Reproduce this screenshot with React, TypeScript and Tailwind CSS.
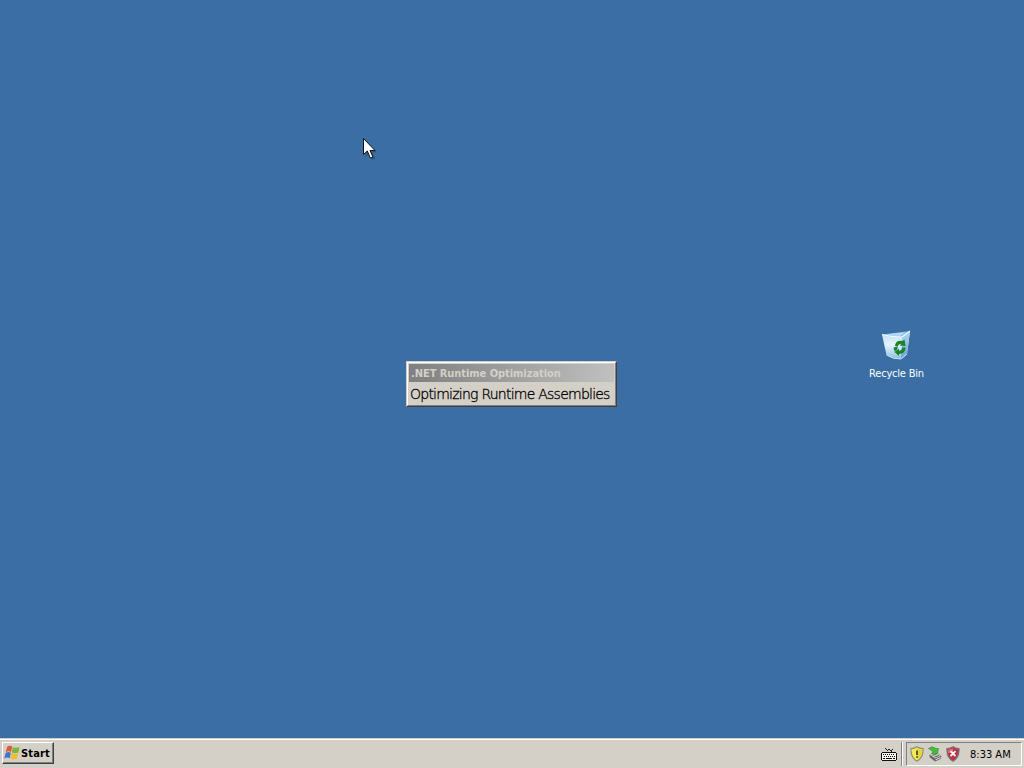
const WindowsFlag = () => (
  <svg width="17" height="16" viewBox="0 0 17 16" className="shrink-0">
    <path d="M3.2 1.8C5 .2 6.800 .4 8.200 1.6L7 7C5.6 6 3.800 6 1.800 7.200Z" fill="#e2582c" />
    <path d="M8.900 1.900C11 3.100 13 3.200 15.600 2.100L14.400 7.500C12 8.600 9.600 8.400 7.700 7.300Z" fill="#75b83b" />
    <path d="M1.600 7.900C3.600 6.800 5.200 6.800 6.900 7.800L5.700 13.200C4.200 12.200 2.400 12.200 .3 13.400Z" fill="#3c74d6" />
    <path d="M7.500 8.100C9.500 9.200 11.800 9.300 14.200 8.200L13 13.800C10.400 14.900 8.200 14.800 6.300 13.600Z" fill="#f1bd2e" />
  </svg>
);

const RecycleBinIcon = () => (
  <svg width="32" height="32" viewBox="0 0 32 32" className="mr-0.5">
    <defs>
      <linearGradient id="bin-body" x1="0" y1="0" x2="0" y2="1">
        <stop offset="0" stopColor="#b9dcf5" />
        <stop offset="0.5" stopColor="#e6f4fc" />
        <stop offset="1" stopColor="#8ebce4" />
      </linearGradient>
      <linearGradient id="bin-side" x1="0" y1="0" x2="0" y2="1">
        <stop offset="0" stopColor="#b4daf3" />
        <stop offset="1" stopColor="#6a9fd3" />
      </linearGradient>
    </defs>
    <path d="M2 5.5Q11 8 22 8L30 2L27 25Q25 28 21 30Q13 30.5 6.5 26Z" fill="url(#bin-body)" />
    <path d="M22 8L30 2L27 25L21 30Z" fill="url(#bin-side)" />
    <path d="M2 5.5L14 4Q22 3 30 2L22 8Q11 8 2 5.5Z" fill="#86bfe9" />
    <path d="M7 5.6Q15 4 25 3.5L20.5 6.7Q13 7.2 7 5.6Z" fill="#b4dcf6" />
    <path d="M2 5.5Q11 8 22 8L30 2" fill="none" stroke="#f4fcff" strokeWidth="1.2" />
    <path d="M6.5 26Q13 30.5 21 30L27 25" fill="none" stroke="#c1def4" strokeWidth="1" />
    <path d="M15 17Q15.500 11 22.500 12L24.500 10.500L25.500 17L19.500 16.500L21.500 14.800Q18.500 14.500 17.800 17.500Z" fill="#168522" />
    <path d="M25.500 18.500Q25.500 24.500 19 25L19 27L14.500 23L19 19.500V21.700Q22 21.500 22.500 18.500Z" fill="#168522" />
    <path d="M13.500 18.500L18 17.500L17 20.500L14.500 22.500Z" fill="#168522" />
  </svg>
);

const KeyboardIcon = () => (
  <svg width="18" height="16" viewBox="0 0 18 16" shapeRendering="crispEdges">
    <path
      d="M5 1h1v1h-1zM6 2h1v1h-1zM7 3h1v-1h1v1h-1v1h-1zM9 2h1v1h1v1h-1v-1h-1zM11 3h1v-1h1v1h-1v2h-1z"
      fill="#222"
    />
    <path d="M2 5h14v1h1v7h-1v1h-14v-1h-1v-7h1z" fill="#111" />
    <rect x="2" y="6" width="14" height="7" fill="#f4f3ef" />
    <path
      d="M3 7.5h12M4 9.5h12"
      stroke="#111"
      strokeWidth="1"
      strokeDasharray="1 1"
    />
    <path d="M3 11.5h2M6 11.5h6M13 11.5h2" stroke="#111" strokeWidth="1" />
  </svg>
);

const shieldPath =
  "M7 .8C9 2.2 11 2.6 13 2.6C13.4 8.5 12 12.5 7 15.2C2 12.5 .6 8.5 1 2.6C3 2.6 5 2.2 7 .8Z";

const WarningShield = () => (
  <svg width="14" height="16" viewBox="0 0 14 16">
    <path d={shieldPath} fill="#f4ed48" stroke="#8a8b78" strokeWidth="1.1" />
    <path d="M7 2.2V14C10.8 11.5 12 8 12 3.6Q9 3.4 7 2.2Z" fill="#e4d932" />
    <path d="M7 4.5V9M7 10.3V11.8" stroke="#242410" strokeWidth="1.4" />
  </svg>
);

const HardwareIcon = () => (
  <svg width="16" height="16" viewBox="0 0 16 16">
    <path d="M2.5 8.500L9 5.500L14.500 10L13.500 13L8 15.500L2.500 11Z" fill="#606460" />
    <path d="M2.500 8.500L9 5.500L14 10L8 12.500Z" fill="#cdd0c8" />
    <path d="M5.500 9.500L10 7.500M7.500 11L12 9.500" stroke="#555" />
    <path d="M8.500 13.800L13.500 11.700" stroke="#e5e5df" />
    <path d="M1.500 2.500L5 .8L9 2.500L11.500 2.500L10.500 7.500L4.500 8L6 5.500Z" fill="#45bf3b" stroke="#278c28" strokeWidth="0.6" />
  </svg>
);

const ErrorShield = () => (
  <svg width="14" height="16" viewBox="0 0 14 16">
    <path d={shieldPath} fill="#c62e42" stroke="#77767b" strokeWidth="1.2" />
    <path d="M2.2 3.8Q5 3.5 7 2.2V7H2.1Z" fill="#e46b77" />
    <path d="M4.5 5.2L9.5 10.2M9.5 5.2L4.5 10.2" stroke="#fff" strokeWidth="1.8" />
  </svg>
);

const Cursor = () => (
  <svg
    className="absolute left-[363px] top-[138px]"
    width="16"
    height="24"
    viewBox="0 0 16 24"
  >
    <path d="M2.5 3V19L6.5 15.5L9.5 22L12.5 21L9.5 14.5H14Z" fill="#1d3d63" opacity="0.45" />
    <path d="M.5 .5V16.5L4.3 13L7.3 20L10 19L7 12.5H12Z" fill="#fff" stroke="#111" />
  </svg>
);

const OptimizationWindow = () => (
  <div className="absolute left-[406px] top-[361px] h-[46px] w-[211px] border border-t-[#d4d0c8] border-l-[#d4d0c8] border-r-[#404040] border-b-[#404040] bg-[#d4d0c8]">
    <div className="flex h-full flex-col border border-t-white border-l-white border-r-[#808080] border-b-[#808080] p-px">
      <div className="flex h-[18px] shrink-0 items-center bg-linear-to-r from-[#808080] to-[#c0c0c0] pt-0.5 pl-0.5">
        <span className="whitespace-nowrap text-[11px] leading-4 font-bold tracking-[-0.05px] text-[#d4d0c8]">
          .NET Runtime Optimization
        </span>
      </div>
      <div className="pt-px pl-[1px] font-['DejaVu_Sans','Open_Sans',sans-serif] text-[14px] leading-[23px] font-extralight tracking-[-0.76px] whitespace-nowrap text-black [-webkit-text-stroke:0.3px_black]">
        Optimizing Runtime Assemblies
      </div>
    </div>
  </div>
);

const Taskbar = () => (
  <div className="flex h-[30px] shrink-0 flex-col bg-[#d4d0c8] pt-px">
    <div className="flex flex-1 items-start border-t border-white pt-0.5 pr-0.5 pl-0.5">
      <button className="flex h-[22px] w-[52px] items-center border border-t-white border-l-white border-r-[#404040] border-b-[#404040] pl-px shadow-[inset_-1px_-1px_0_#808080]">
        <WindowsFlag />
        <span className="text-[11px] leading-none font-bold tracking-[0.15px] text-black">Start</span>
      </button>
      <div className="ml-auto flex items-center">
        <div className="mt-0.5 mr-[3px]">
          <KeyboardIcon />
        </div>
        <div className="mr-[3px] h-[24px] w-0.5 border-l border-l-[#808080] bg-white" />
        <div className="flex h-[24px] w-[116px] items-center border border-t-[#808080] border-l-[#808080] border-r-white border-b-white pl-[3px]">
          <WarningShield />
          <div className="ml-[3px]">
            <HardwareIcon />
          </div>
          <div className="ml-[3px]">
            <ErrorShield />
          </div>
          <span className="ml-[10px] whitespace-nowrap text-[11px] leading-none text-black">
            8:33 AM
          </span>
        </div>
      </div>
    </div>
  </div>
);

const App = () => (
  <div className="flex h-[768px] w-[1024px] flex-col overflow-hidden bg-[#3b6ea5] font-['DejaVu_Sans_Condensed','DejaVu_Sans',sans-serif]">
    <div className="relative flex-1">
      <Cursor />
      <OptimizationWindow />
      <div className="absolute left-[859px] top-[329px] flex w-[75px] flex-col items-center">
        <RecycleBinIcon />
        <span className="mt-[6px] whitespace-nowrap text-[11px] leading-[14px] tracking-[-0.2px] text-white">
          Recycle Bin
        </span>
      </div>
    </div>
    <Taskbar />
  </div>
);

export default App;
